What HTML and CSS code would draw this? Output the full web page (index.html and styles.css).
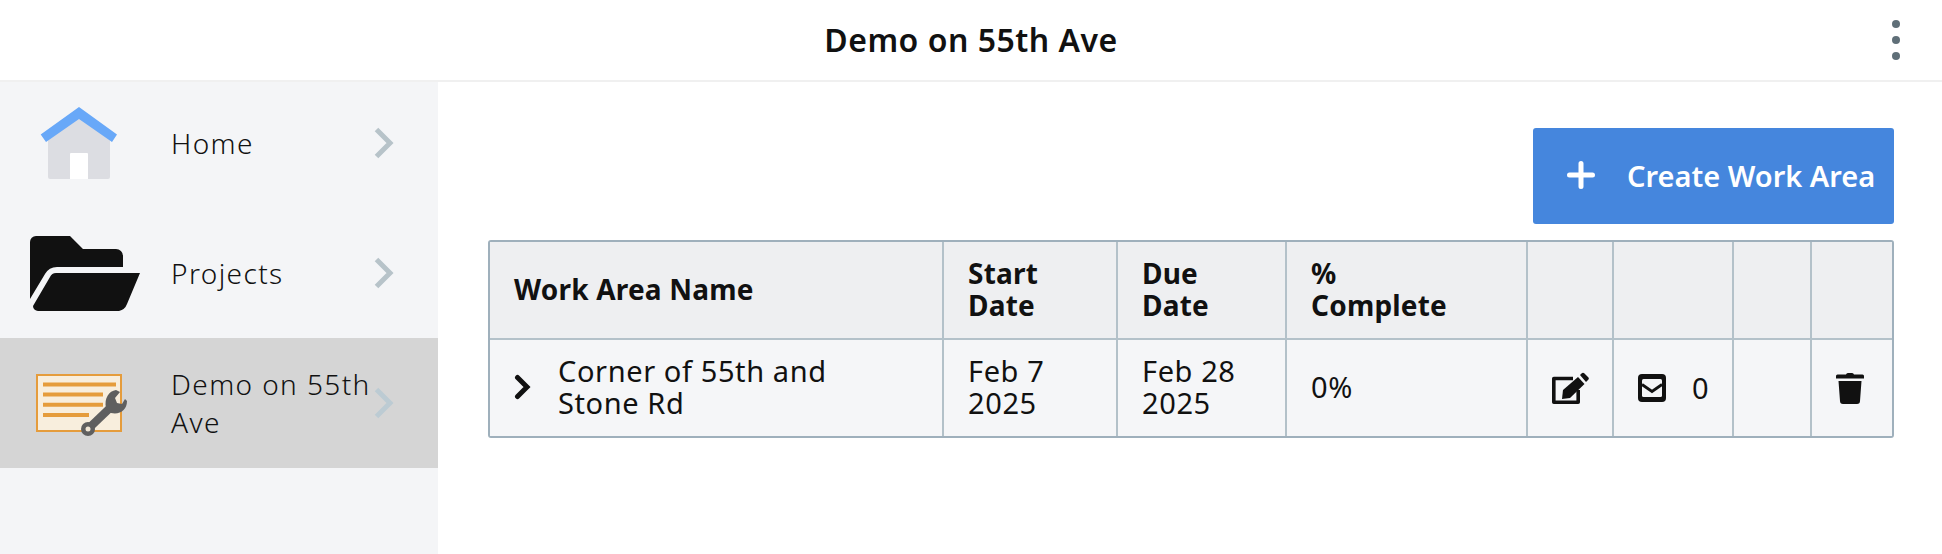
FILE: index.html
```html
<!DOCTYPE html>
<html lang="en">
<head>
<meta charset="utf-8">
<title>Demo on 55th Ave</title>
<link rel="stylesheet" href="styles.css">
</head>
<body>
<header class="topbar">
  <h1 class="title">Demo on 55th Ave</h1>
  <div class="kebab"><span></span><span></span><span></span></div>
</header>
<div class="shell">
  <nav class="sidebar">
    <a class="nav-item">
      <span class="nav-icon icon-home">
        <svg width="78" height="72" viewBox="0 0 78 72"><path d="M8 28 39 6l31 22v42a2 2 0 0 1-2 2H10a2 2 0 0 1-2-2z" fill="#dcdde2"/><path d="M30 47a1 1 0 0 1 1-1h16a1 1 0 0 1 1 1v25H30z" fill="#fff"/><path d="M39 0 77 27.500 72 35 39 12 6 35 .7 27.500z" fill="#68a8f8"/></svg>
      </span>
      <span class="nav-label">Home</span>
      <svg class="nav-chev" width="20" height="32" viewBox="0 0 20 32"><path d="M2.500 2.500 16 16 2.500 29.500" fill="none" stroke="#b7c3c9" stroke-width="5"/></svg>
    </a>
    <a class="nav-item">
      <span class="nav-icon icon-folder">
        <svg width="110" height="75" viewBox="0 0 110 75"><path d="M0 63V6a6 6 0 0 1 6-6h34l13 13h33a7 7 0 0 1 7 7v11H27a14 14 0 0 0-12 7z" fill="#111"/><path d="M20 41a7 7 0 0 1 6-4h84L97 68a11 11 0 0 1-8 7H8a5 5 0 0 1-5-5z" fill="#111"/></svg>
      </span>
      <span class="nav-label">Projects</span>
      <svg class="nav-chev" width="20" height="32" viewBox="0 0 20 32"><path d="M2.500 2.500 16 16 2.500 29.500" fill="none" stroke="#b7c3c9" stroke-width="5"/></svg>
    </a>
    <a class="nav-item active">
      <span class="nav-icon icon-plan">
        <svg width="92" height="62" viewBox="0 0 92 62"><rect x="1" y="1" width="84" height="56" fill="#f8eedd" stroke="#e59c3c" stroke-width="2"/><path d="M7 10.500h73M7 20.500h60M7 30.700h60M7 41h46" stroke="#e59c3c" stroke-width="4"/><path d="M52 55 75 33" stroke="#5f5f5f" stroke-width="8"/><path d="M70 34C68 24 73 17 80 16L84 18 79 24 81 29 86 30 89 25 91 27C91 36 84 41 75 39z" fill="#5f5f5f"/><circle cx="52" cy="55" r="7" fill="#5f5f5f"/><circle cx="52" cy="55" r="2.500" fill="#f1e7d6"/></svg>
      </span>
      <span class="nav-label">Demo on 55th Ave</span>
      <svg class="nav-chev" width="20" height="32" viewBox="0 0 20 32"><path d="M2.500 2.500 16 16 2.500 29.500" fill="none" stroke="#bccbd3" stroke-width="5"/></svg>
    </a>
  </nav>
  <main class="content">
    <div class="actions">
      <button class="create-btn">
        <svg width="28" height="28" viewBox="0 0 28 28"><path d="M14 2.500v23M2.500 14h23" stroke="#fff" stroke-width="5" stroke-linecap="round"/></svg>
        <span>Create Work Area</span>
      </button>
    </div>
    <table class="grid">
      <colgroup>
        <col class="c-name"><col class="c-date"><col class="c-due"><col class="c-pct"><col class="c-edit"><col class="c-mail"><col class="c-blank"><col class="c-trash">
      </colgroup>
      <thead>
        <tr>
          <th>Work Area Name</th>
          <th>Start Date</th>
          <th>Due Date</th>
          <th>%<br>Complete</th>
          <th></th><th></th><th></th><th></th>
        </tr>
      </thead>
      <tbody>
        <tr>
          <td>
            <div class="name-cell">
              <svg width="18" height="26" viewBox="0 0 18 26"><path d="M3.500 3.500 13 13l-9.500 9.500" fill="none" stroke="#111" stroke-width="5" stroke-linecap="round"/></svg>
              <span class="name-text">Corner of 55th and Stone Rd</span>
            </div>
          </td>
          <td>Feb 7 2025</td>
          <td>Feb 28 2025</td>
          <td>0%</td>
          <td class="icon-cell">
            <svg width="37" height="32" viewBox="0 0 37 32"><path d="M21 6.500H1.800V30.200H26.200V18" fill="none" stroke="#111" stroke-width="3.600" stroke-linejoin="round"/><path d="M11 18 26 5l6.500 7L18 26l-8 1z" fill="#111"/><path d="M28 3l1.500-1.500a2 2 0 0 1 3 0l3.500 3.500a2 2 0 0 1 0 3L34 10z" fill="#111"/></svg>
          </td>
          <td class="icon-cell">
            <div class="mail">
              <svg width="28" height="28" viewBox="0 0 28 28"><rect width="28" height="28" rx="4" fill="#111"/><rect x="4" y="5" width="20" height="18" rx="1.500" fill="#f4f5f7"/><path d="M4 10.500 14 17.500l10-7" fill="none" stroke="#111" stroke-width="2.800"/></svg>
              <span>0</span>
            </div>
          </td>
          <td></td>
          <td class="icon-cell trash-cell">
            <svg width="28" height="32" viewBox="0 0 28 32"><path d="M10 2.500a2 2 0 0 1 2-1.500h4a2 2 0 0 1 2 1.500h8.500a1.500 1.500 0 0 1 1.500 1.500v2.500H0V4a1.500 1.500 0 0 1 1.500-1.500z" fill="#111"/><path d="M2.500 9h23l-1.500 20a3 3 0 0 1-3 3H7a3 3 0 0 1-3-3z" fill="#111"/></svg>
          </td>
        </tr>
      </tbody>
    </table>
  </main>
</div>
</body>
</html>
```

FILE: styles.css
```css
* { box-sizing: border-box; }
html, body { margin: 0; height: 100%; }
body {
  font-family: "Noto Sans", "Open Sans", sans-serif;
  color: #111;
  background: #fff;
  font-size: 26px;
  overflow: hidden;
}
.topbar {
  height: 82px;
  border-bottom: 2px solid #f0f0f0;
  display: flex;
  align-items: center;
  justify-content: center;
  position: relative;
}
.title {
  margin: 0 0 2px;
  font-size: 32px;
  font-weight: 600;
  letter-spacing: 0.5px;
}
.kebab {
  position: absolute;
  right: 42px;
  top: 20px;
  display: flex;
  flex-direction: column;
  gap: 8px;
}
.kebab span {
  width: 8px;
  height: 8px;
  border-radius: 50%;
  background: #5f6f78;
}
.shell {
  display: flex;
  height: 472px;
}
.sidebar {
  width: 438px;
  flex: none;
  background: #f4f5f7;
}
.nav-item {
  display: flex;
  align-items: center;
  height: 130px;
  padding-right: 44px;
}
.nav-item:first-child {
  height: 126px;
  padding-bottom: 4px;
}
.nav-item.active { background: #d5d5d5; }
.nav-icon {
  width: 171px;
  flex: none;
  display: flex;
  align-items: center;
}
.icon-home { padding-left: 40px; }
.icon-folder { padding-left: 30px; }
.icon-plan { padding-left: 36px; padding-top: 4px; }
.nav-icon svg { flex: none; }
.nav-label {
  flex: 1;
  font-size: 28px;
  line-height: 38px;
  letter-spacing: 1.4px;
  font-weight: 300;
  color: #111;
}
.nav-chev { flex: none; }
.content {
  flex: 1;
  padding: 46px 48px 0 50px;
}
.actions {
  display: flex;
  justify-content: flex-end;
  margin-bottom: 16px;
}
.create-btn {
  width: 361px;
  height: 96px;
  border: 0;
  border-radius: 3px;
  background: #4586dd;
  color: #fff;
  display: flex;
  align-items: center;
  gap: 32px;
  padding: 0 0 2px 34px;
  font: 600 29px "Noto Sans", sans-serif;
}
.grid {
  width: 100%;
  table-layout: fixed;
  border-collapse: separate;
  border-spacing: 0;
  border: 2px solid #9fb0bc;
  border-radius: 3px;
  line-height: 32px;
}
.c-name { width: 454px; }
.c-date { width: 174px; }
.c-due { width: 169px; }
.c-pct { width: 241px; }
.c-edit { width: 86px; }
.c-mail { width: 120px; }
.c-blank { width: 78px; }
.c-trash { width: 80px; }
th, td {
  padding: 0 24px 2px;
  text-align: left;
  vertical-align: middle;
  border-right: 2px solid #b3c1c9;
}
th:last-child, td:last-child { border-right: 0; }
th {
  height: 98px;
  background: #eeeff1;
  border-bottom: 2px solid #b3c1c9;
  font-size: 28px;
  font-weight: 700;
  letter-spacing: 0.2px;
}
td {
  height: 96px;
  background: #f5f6f8;
  font-size: 29px;
  letter-spacing: 0.6px;
}
.name-cell {
  display: flex;
  align-items: center;
  gap: 26px;
}
.name-cell svg { flex: none; }
.name-text { max-width: 300px; }
.icon-cell { padding: 0; }
.icon-cell svg { display: block; margin: 0 auto; }
.trash-cell { padding-right: 4px; }
.mail {
  display: flex;
  align-items: center;
  gap: 26px;
  padding-left: 24px;
}
.mail svg { margin: 0; }
```
